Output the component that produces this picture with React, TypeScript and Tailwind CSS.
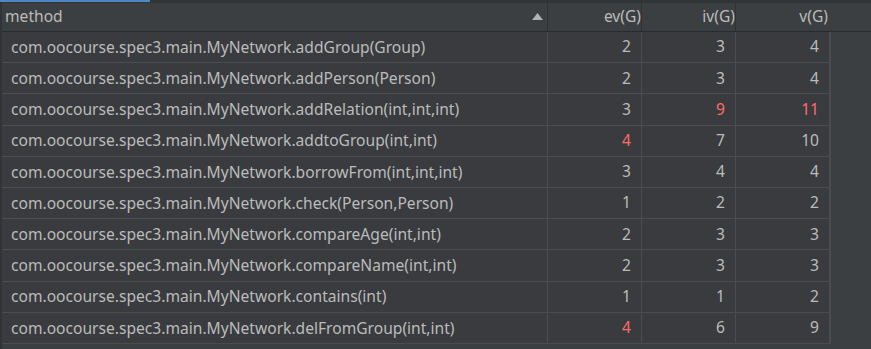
import React from 'react';

type Row = { method: string; ev: number; iv: number; v: number; red: ('ev' | 'iv' | 'v')[] };

const rows: Row[] = [
  { method: 'com.oocourse.spec3.main.MyNetwork.addGroup(Group)', ev: 2, iv: 3, v: 4, red: [] },
  { method: 'com.oocourse.spec3.main.MyNetwork.addPerson(Person)', ev: 2, iv: 3, v: 4, red: [] },
  { method: 'com.oocourse.spec3.main.MyNetwork.addRelation(int,int,int)', ev: 3, iv: 9, v: 11, red: ['iv', 'v'] },
  { method: 'com.oocourse.spec3.main.MyNetwork.addtoGroup(int,int)', ev: 4, iv: 7, v: 10, red: ['ev'] },
  { method: 'com.oocourse.spec3.main.MyNetwork.borrowFrom(int,int,int)', ev: 3, iv: 4, v: 4, red: [] },
  { method: 'com.oocourse.spec3.main.MyNetwork.check(Person,Person)', ev: 1, iv: 2, v: 2, red: [] },
  { method: 'com.oocourse.spec3.main.MyNetwork.compareAge(int,int)', ev: 2, iv: 3, v: 3, red: [] },
  { method: 'com.oocourse.spec3.main.MyNetwork.compareName(int,int)', ev: 2, iv: 3, v: 3, red: [] },
  { method: 'com.oocourse.spec3.main.MyNetwork.contains(int)', ev: 1, iv: 1, v: 2, red: [] },
  { method: 'com.oocourse.spec3.main.MyNetwork.delFromGroup(int,int)', ev: 4, iv: 6, v: 9, red: ['ev'] },
];

const Num: React.FC<{ value: number; red: boolean }> = ({ value, red }) => (
  <div
    className={`flex items-center justify-end border-l border-[#4a4c4e] pr-[10px] ${
      red ? 'text-[#ff6b68]' : 'text-[#bbbbbb]'
    }`}
  >
    {value}
  </div>
);

export default function App() {
  return (
    <div
      className="flex h-[349px] w-[871px] flex-col overflow-hidden bg-[#3c3f41] text-[15.6px] text-[#bbbbbb]"
      style={{ fontFamily: '"Noto Sans", "Open Sans", sans-serif' }}
    >
      <div className="flex h-[3px] shrink-0 bg-[#313335]">
        <div className="h-[2px] w-[150px] bg-[#4a88c7]" />
      </div>
      <div className="flex min-h-0 flex-1">
        <div className="w-[2px] shrink-0 bg-[#313335]" />
        <div className="flex min-w-0 flex-1 flex-col">
          <div className="grid h-[29px] shrink-0 grid-cols-[545px_94px_94px_94px_1fr] border-b border-[#2b2b2b]">
            <div className="relative flex items-center pl-[3px]">
              method
              <svg className="absolute right-[4px] top-[10px]" width="11" height="7" viewBox="0 0 11 7">
                <path d="M5.5 0 L11 7 L0 7 Z" fill="#afb1b3" />
              </svg>
            </div>
            <div className="flex items-center justify-end border-l border-[#2f3133] pr-[0px]">ev(G)</div>
            <div className="flex items-center justify-end border-l border-[#2f3133] pr-[0px]">iv(G)</div>
            <div className="flex items-center justify-end border-l border-[#2f3133] pr-[1px]">v(G)</div>
            <div />
          </div>
          <div className="flex">
            <div className="w-[827px] bg-[#393b3e]">
              {rows.map((r) => (
                <div
                  key={r.method}
                  className="grid h-[31.2px] grid-cols-[545px_94px_94px_94px] border-b border-[#4a4c4e]"
                >
                  <div className="flex items-center pl-[9px] pt-[1px]">{r.method}</div>
                  <Num value={r.ev} red={r.red.includes('ev')} />
                  <Num value={r.iv} red={r.red.includes('iv')} />
                  <Num value={r.v} red={r.red.includes('v')} />
                </div>
              ))}
            </div>
            <div className="flex-1 border-l-[2px] border-[#4a4c4e] bg-[#3c3f41]" />
          </div>
        </div>
      </div>
    </div>
  );
}
